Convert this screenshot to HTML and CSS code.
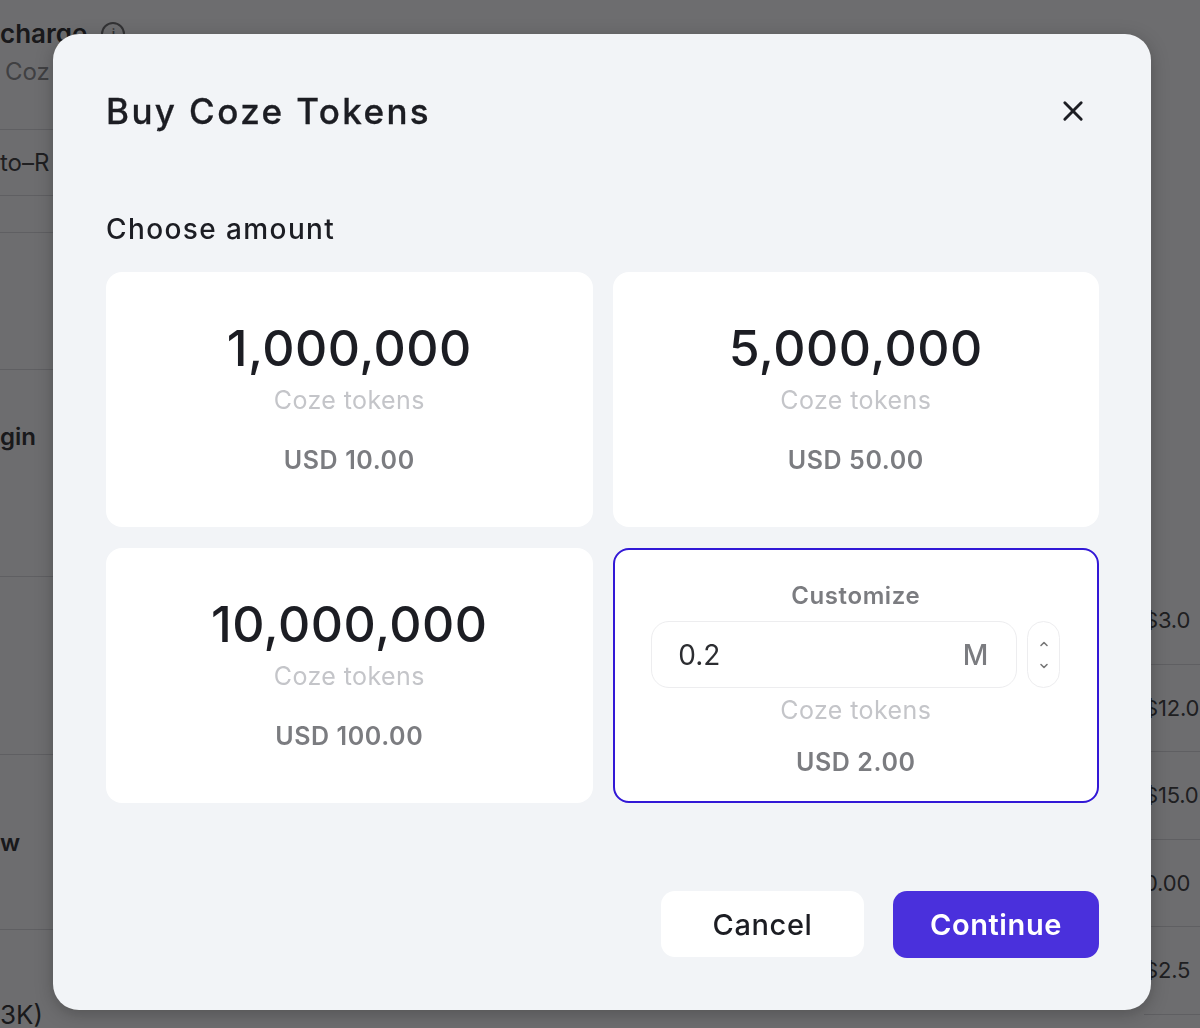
FILE: index.html
```html
<!DOCTYPE html>
<html lang="en">
<head>
  <meta charset="UTF-8">
  <meta name="viewport" content="width=device-width, initial-scale=1.0">
  <title>Buy Coze Tokens</title>
  <link rel="stylesheet" href="styles.css">
</head>
<body>
  <div class="page">
    <div class="page-left">
      <div class="row row-head">
        <div class="row-title">charge <span class="info">i</span></div>
        <div class="row-sub">Coz</div>
      </div>
      <div class="row row-auto">to–R</div>
      <div class="row row-gap"></div>
      <div class="row row-tall"></div>
      <div class="row row-plugin">gin</div>
      <div class="row row-mid"></div>
      <div class="row row-new">w</div>
      <div class="row row-last">3K)</div>
    </div>
    <div class="page-right">
      <div class="price">$3.0</div>
      <div class="price">$12.0</div>
      <div class="price">$15.0</div>
      <div class="price">0.00</div>
      <div class="price">$2.5</div>
    </div>
  </div>

  <div class="overlay">
    <div class="modal">
      <div class="modal-header">
        <h1>Buy Coze Tokens</h1>
        <button class="close" aria-label="Close">
          <svg width="28" height="28" viewBox="0 0 24 24" fill="none" stroke="#1c1d23" stroke-width="2.5" stroke-linecap="round">
            <path d="M5 5L19 19M19 5L5 19"/>
          </svg>
        </button>
      </div>

      <div class="label">Choose amount</div>

      <div class="grid">
        <div class="card">
          <div class="amount">1,000,000</div>
          <div class="unit">Coze tokens</div>
          <div class="usd">USD 10.00</div>
        </div>
        <div class="card">
          <div class="amount">5,000,000</div>
          <div class="unit">Coze tokens</div>
          <div class="usd">USD 50.00</div>
        </div>
        <div class="card">
          <div class="amount">10,000,000</div>
          <div class="unit">Coze tokens</div>
          <div class="usd">USD 100.00</div>
        </div>
        <div class="card card-custom">
          <div class="custom-title">Customize</div>
          <div class="custom-input">
            <div class="field">
              <span class="value">0.2</span>
              <span class="suffix">M</span>
            </div>
            <div class="spinner">
              <svg width="14" height="10" viewBox="0 0 14 10" fill="none" stroke="#777" stroke-width="1.6" stroke-linecap="round" stroke-linejoin="round"><path d="M4 6.5L7 3.5L10 6.5"/></svg>
              <svg width="14" height="10" viewBox="0 0 14 10" fill="none" stroke="#777" stroke-width="1.6" stroke-linecap="round" stroke-linejoin="round"><path d="M4 3.5L7 6.5L10 3.5"/></svg>
            </div>
          </div>
          <div class="unit">Coze tokens</div>
          <div class="usd usd-custom">USD 2.00</div>
        </div>
      </div>

      <div class="footer">
        <button class="btn btn-cancel">Cancel</button>
        <button class="btn btn-primary">Continue</button>
      </div>
    </div>
  </div>
</body>
</html>
```

FILE: styles.css
```css
html, body {
  margin: 0;
  padding: 0;
  height: 100%;
  overflow: hidden;
}
body {
  font-family: Inter, "Noto Sans", sans-serif;
  background: #fff;
  color: #1c1d23;
}

/* page behind the dialog */
.page {
  display: flex;
  justify-content: space-between;
  height: 100%;
}
.page-left {
  width: 200px;
}
.row {
  border-bottom: 1px solid #d9d9dc;
  display: flex;
  align-items: center;
  font-size: 24px;
  color: #222;
  box-sizing: border-box;
}
.row-head {
  height: 130px;
  flex-direction: column;
  align-items: flex-start;
  justify-content: flex-start;
}
.row-title {
  font-size: 26px;
  font-weight: 600;
  margin-top: 18px;
  display: flex;
  align-items: center;
  gap: 14px;
}
.info {
  display: inline-flex;
  align-items: center;
  justify-content: center;
  width: 20px;
  height: 20px;
  border: 2px solid #666;
  border-radius: 50%;
  font-size: 13px;
  color: #666;
}
.row-sub {
  font-size: 24px;
  color: #888;
  margin-top: 8px;
  margin-left: 5px;
}
.row-auto { height: 66px; color: #333; }
.row-gap { height: 37px; }
.row-tall { height: 137px; }
.row-plugin {
  height: 207px;
  font-weight: 600;
  align-items: flex-start;
  padding-top: 52px;
}
.row-mid { height: 178px; }
.row-new { height: 175px; font-weight: 600; }
.row-last {
  height: 98px;
  border-bottom: none;
  align-items: flex-end;
  font-size: 26px;
  line-height: 26px;
  margin-bottom: -12px;
}

.page-right {
  width: 56px;
  padding-top: 577px;
}
.price {
  height: 87.5px;
  box-sizing: border-box;
  display: flex;
  align-items: center;
  border-bottom: 1px solid #d9d9dc;
  font-size: 22px;
  letter-spacing: -0.2px;
  color: #333;
  white-space: nowrap;
}

/* dialog */
.overlay {
  position: fixed;
  inset: 0;
  background: rgba(20, 20, 22, 0.62);
  display: flex;
  padding: 34px 49px 18px 53px;
}
.modal {
  flex: 1;
  background: #f2f4f7;
  border-radius: 26px;
  padding: 52px 52px 52px 53px;
  display: flex;
  flex-direction: column;
  box-shadow: 0 4px 18px rgba(0,0,0,0.25);
}
.modal-header {
  display: flex;
  align-items: center;
  justify-content: space-between;
  height: 50px;
}
.modal-header h1 {
  margin: 0;
  font-size: 35px;
  font-weight: 500;
  color: #1c1d23;
  letter-spacing: 2.4px;
  -webkit-text-stroke: 0.3px #1c1d23;
}
.close {
  background: none;
  border: none;
  padding: 0;
  margin-right: 12px;
  display: flex;
  cursor: pointer;
}
.label {
  margin-top: 76px;
  font-size: 28px;
  font-weight: 500;
  color: #1c1d23;
  letter-spacing: 1.4px;
}
.grid {
  margin-top: 26px;
  display: grid;
  grid-template-columns: 1fr 1fr;
  grid-auto-rows: 255px;
  gap: 21px 20px;
}
.card {
  background: #fff;
  border-radius: 16px;
  display: flex;
  flex-direction: column;
  align-items: center;
  padding-top: 46px;
  box-sizing: border-box;
}
.amount {
  font-size: 50px;
  font-weight: 500;
  line-height: 60px;
  color: #1c1d23;
  letter-spacing: 0.5px;
}
.unit {
  font-size: 25px;
  line-height: 30px;
  color: #c4c5c9;
  margin-top: 7px;
  letter-spacing: 0.4px;
}
.usd {
  font-size: 25px;
  font-weight: 600;
  color: #7b7c80;
  margin-top: 30px;
  letter-spacing: 0.6px;
}
.card-custom {
  border: 2.5px solid #3218d6;
  padding-top: 31px;
}
.custom-title {
  font-size: 24px;
  font-weight: 600;
  color: #7b7c80;
  line-height: 30px;
  letter-spacing: 0.6px;
}
.custom-input {
  display: flex;
  gap: 10px;
  margin-top: 10px;
  margin-bottom: 0;
}
.field {
  width: 366px;
  height: 67px;
  box-sizing: border-box;
  border: 1.5px solid #ededef;
  border-radius: 18px;
  display: flex;
  align-items: center;
  justify-content: space-between;
  padding: 0 28px 0 26px;
}
.value {
  font-size: 28px;
  color: #2c2d31;
}
.suffix {
  font-size: 28px;
  color: #7b7c80;
  font-weight: 500;
}
.spinner {
  width: 33px;
  height: 67px;
  box-sizing: border-box;
  border: 1.5px solid #ededef;
  border-radius: 17px;
  display: flex;
  flex-direction: column;
  align-items: center;
  justify-content: center;
  gap: 12px;
}
.usd-custom {
  margin-top: 22px;
}
.footer {
  margin-top: auto;
  display: flex;
  justify-content: flex-end;
  gap: 29px;
}
.btn {
  height: 66px;
  border-radius: 14px;
  border: none;
  font-family: Inter, "Noto Sans", sans-serif;
  font-size: 29px;
  letter-spacing: 0.6px;
  cursor: pointer;
}
.btn-cancel {
  width: 203px;
  background: #fff;
  color: #1c1d23;
  font-weight: 500;
}
.btn-primary {
  width: 206px;
  height: 67px;
  background: #4a30dc;
  color: #fff;
  font-weight: 600;
}
```
